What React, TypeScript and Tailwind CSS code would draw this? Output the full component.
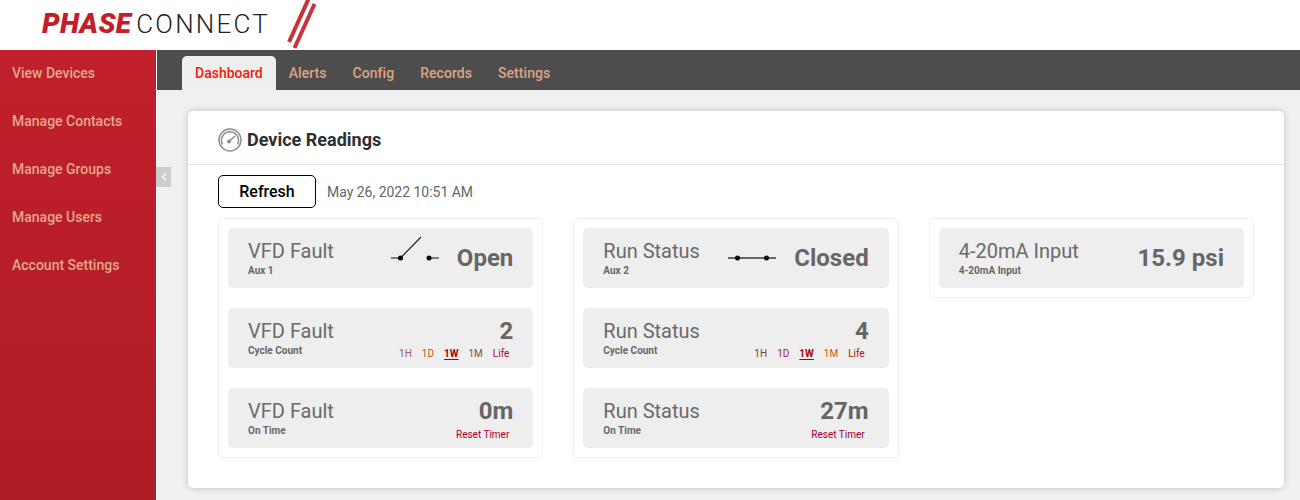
import { ChevronLeft } from "lucide-react";

const navItems = ["View Devices", "Manage Contacts", "Manage Groups", "Manage Users", "Account Settings"];
const tabs = ["Alerts", "Config", "Records", "Settings"];

interface RangeLink {
  label: string;
  className: string;
}

const vfdRanges: RangeLink[] = [
  { label: "1H", className: "text-[#9a5a70]" },
  { label: "1D", className: "text-[#b85c10]" },
  { label: "1W", className: "text-[#a80000] font-bold underline underline-offset-2" },
  { label: "1M", className: "text-[#8c4a3c]" },
  { label: "Life", className: "text-[#b0002a]" },
];

const runRanges: RangeLink[] = [
  { label: "1H", className: "text-[#6a4a40]" },
  { label: "1D", className: "text-[#a8204a]" },
  { label: "1W", className: "text-[#a80000] font-bold underline underline-offset-2" },
  { label: "1M", className: "text-[#b85c10]" },
  { label: "Life", className: "text-[#b01000]" },
];

function Gauge() {
  return (
    <svg width="24" height="24" viewBox="0 0 24 24" fill="none" stroke="#8f8f8f">
      <circle cx="12" cy="12" r="11" strokeWidth="1.5" />
      <path d="M4.6 16.5a8.5 8.5 0 1 1 14.8 0" strokeWidth="1.5" />
      <circle cx="11" cy="13.5" r="2" fill="#8f8f8f" stroke="none" />
      <path d="M11 13.5 17 8" strokeWidth="1.6" />
    </svg>
  );
}

function OpenSwitch() {
  return (
    <svg width="48" height="44" viewBox="0 0 48 44" fill="none">
      <path d="M0 22h10M38 22h10" stroke="#555" strokeWidth="1.4" />
      <path d="M9.5 22 30 1" stroke="#222" strokeWidth="1.2" />
      <circle cx="9.5" cy="22" r="2.5" fill="#000" />
      <circle cx="38" cy="22" r="2.5" fill="#000" />
    </svg>
  );
}

function ClosedSwitch() {
  return (
    <svg width="48" height="8" viewBox="0 0 48 8" fill="none">
      <path d="M0 4h48" stroke="#666" strokeWidth="2" />
      <circle cx="9.5" cy="4" r="2.5" fill="#000" />
      <circle cx="38.5" cy="4" r="2.5" fill="#000" />
    </svg>
  );
}

function Reading({
  title,
  sub,
  value,
  icon,
  ranges,
  reset,
}: {
  title: string;
  sub: string;
  value: string;
  icon?: React.ReactNode;
  ranges?: RangeLink[];
  reset?: boolean;
}) {
  const hasFooter = ranges || reset;
  return (
    <div className="flex h-[60px] items-center justify-between rounded-[5px] bg-[#eeeeee] pl-5 pr-5">
      <div className="flex flex-col">
        <div className="text-[20px] leading-[24px] text-[#6a6a6a]">{title}</div>
        <div className="mt-px text-[10px] leading-[14px] font-bold text-[#666666]">{sub}</div>
      </div>
      {hasFooter ? (
        <div className="flex flex-col items-end self-start pt-[11px]">
          <div className="text-[24px] leading-[24px] font-bold text-[#666666]">{value}</div>
          {ranges && (
            <div className="mt-1 mr-1 flex gap-[10px] text-[10px] leading-[14px]">
              {ranges.map((r) => (
                <span key={r.label} className={r.className}>
                  {r.label}
                </span>
              ))}
            </div>
          )}
          {reset && <div className="mt-[5px] mr-1 text-[10px] leading-[14px] text-[#a8002a]">Reset Timer</div>}
        </div>
      ) : (
        <div className="flex items-center gap-[18px]">
          {icon}
          <div className="text-[24px] leading-[28px] font-bold text-[#666666]">{value}</div>
        </div>
      )}
    </div>
  );
}

function Group({ children }: { children: React.ReactNode }) {
  return (
    <div className="flex flex-col gap-5 rounded-[5px] border border-[#eeeeee] bg-white p-[9px]">{children}</div>
  );
}

export default function App() {
  return (
    <div className="flex h-[500px] w-[1300px] flex-col overflow-hidden bg-white font-['Roboto',sans-serif]">
      <header className="flex h-[50px] shrink-0 items-start bg-white pl-[42px]">
        <span className="mt-[10px] text-[28px] leading-[28px] font-black tracking-[0.3px] text-[#c1202a] italic">
          PHASE
        </span>
        <span className="mt-[10px] ml-[5px] text-[26px] leading-[28px] font-light tracking-[2.2px] text-[#222222]">
          CONNECT
        </span>
        <svg width="32" height="50" viewBox="0 0 32 50" className="ml-[17px] shrink-0" stroke="#c8323a" strokeWidth="4">
          <path d="M21.5 -1 2 42" />
          <path d="M27.5 4 7.5 48" />
        </svg>
      </header>

      <div className="flex min-h-0 flex-1">
        <nav className="flex w-[156px] shrink-0 flex-col bg-gradient-to-b from-[#c1202a] to-[#ae1c25] pt-[14px]">
          {navItems.map((item) => (
            <a key={item} className="mb-[30px] pl-3 text-[14px] leading-[18px] font-medium text-[#e2a98a]">
              {item}
            </a>
          ))}
        </nav>

        <div className="relative ml-px flex min-w-0 flex-1 flex-col bg-[#f0f0f0]">
          <div className="flex h-10 shrink-0 items-end bg-[#4d4d4d] pl-[25px]">
            <div className="flex h-[34px] items-center rounded-t-[5px] bg-[#eeeeee] px-[13px] text-[14px] font-medium text-[#f0200f]">
              Dashboard
            </div>
            {tabs.map((tab) => (
              <div
                key={tab}
                className="flex h-[34px] items-center px-[13px] text-[14px] font-medium tracking-[0.05px] text-[#dca583]"
              >
                {tab}
              </div>
            ))}
          </div>

          <button className="absolute top-[117px] -left-px flex h-5 w-[15px] items-center justify-center bg-[#cccccc] text-white">
            <ChevronLeft size={12} strokeWidth={2.5} />
          </button>

          <main className="mt-[21px] mr-4 ml-[31px] h-[377px] rounded-[5px] bg-white shadow-[0_0_6px_rgba(0,0,0,0.2)]">
            <div className="flex h-[54px] items-center gap-[5px] border-b border-[#e2e2e2] pt-[4px] pl-[30px]">
              <Gauge />
              <h2 className="text-[18px] font-bold text-[#2f2f2f]">Device Readings</h2>
            </div>
            <div className="px-[30px] pt-[10px]">
              <div className="flex items-center gap-[11px]">
                <button className="h-[33px] w-[98px] rounded-[5px] border border-black bg-white text-[16px] font-medium text-black">
                  Refresh
                </button>
                <span className="pt-0.5 text-[14px] tracking-[-0.02px] text-[#666666]">May 26, 2022 10:51 AM</span>
              </div>
              <div className="mt-[10px] grid grid-cols-3 items-start gap-[30px]">
                <Group>
                  <Reading title="VFD Fault" sub="Aux 1" value="Open" icon={<OpenSwitch />} />
                  <Reading title="VFD Fault" sub="Cycle Count" value="2" ranges={vfdRanges} />
                  <Reading title="VFD Fault" sub="On Time" value="0m" reset />
                </Group>
                <Group>
                  <Reading title="Run Status" sub="Aux 2" value="Closed" icon={<ClosedSwitch />} />
                  <Reading title="Run Status" sub="Cycle Count" value="4" ranges={runRanges} />
                  <Reading title="Run Status" sub="On Time" value="27m" reset />
                </Group>
                <Group>
                  <Reading title="4-20mA Input" sub="4-20mA Input" value="15.9 psi" />
                </Group>
              </div>
            </div>
          </main>
        </div>
      </div>
    </div>
  );
}
